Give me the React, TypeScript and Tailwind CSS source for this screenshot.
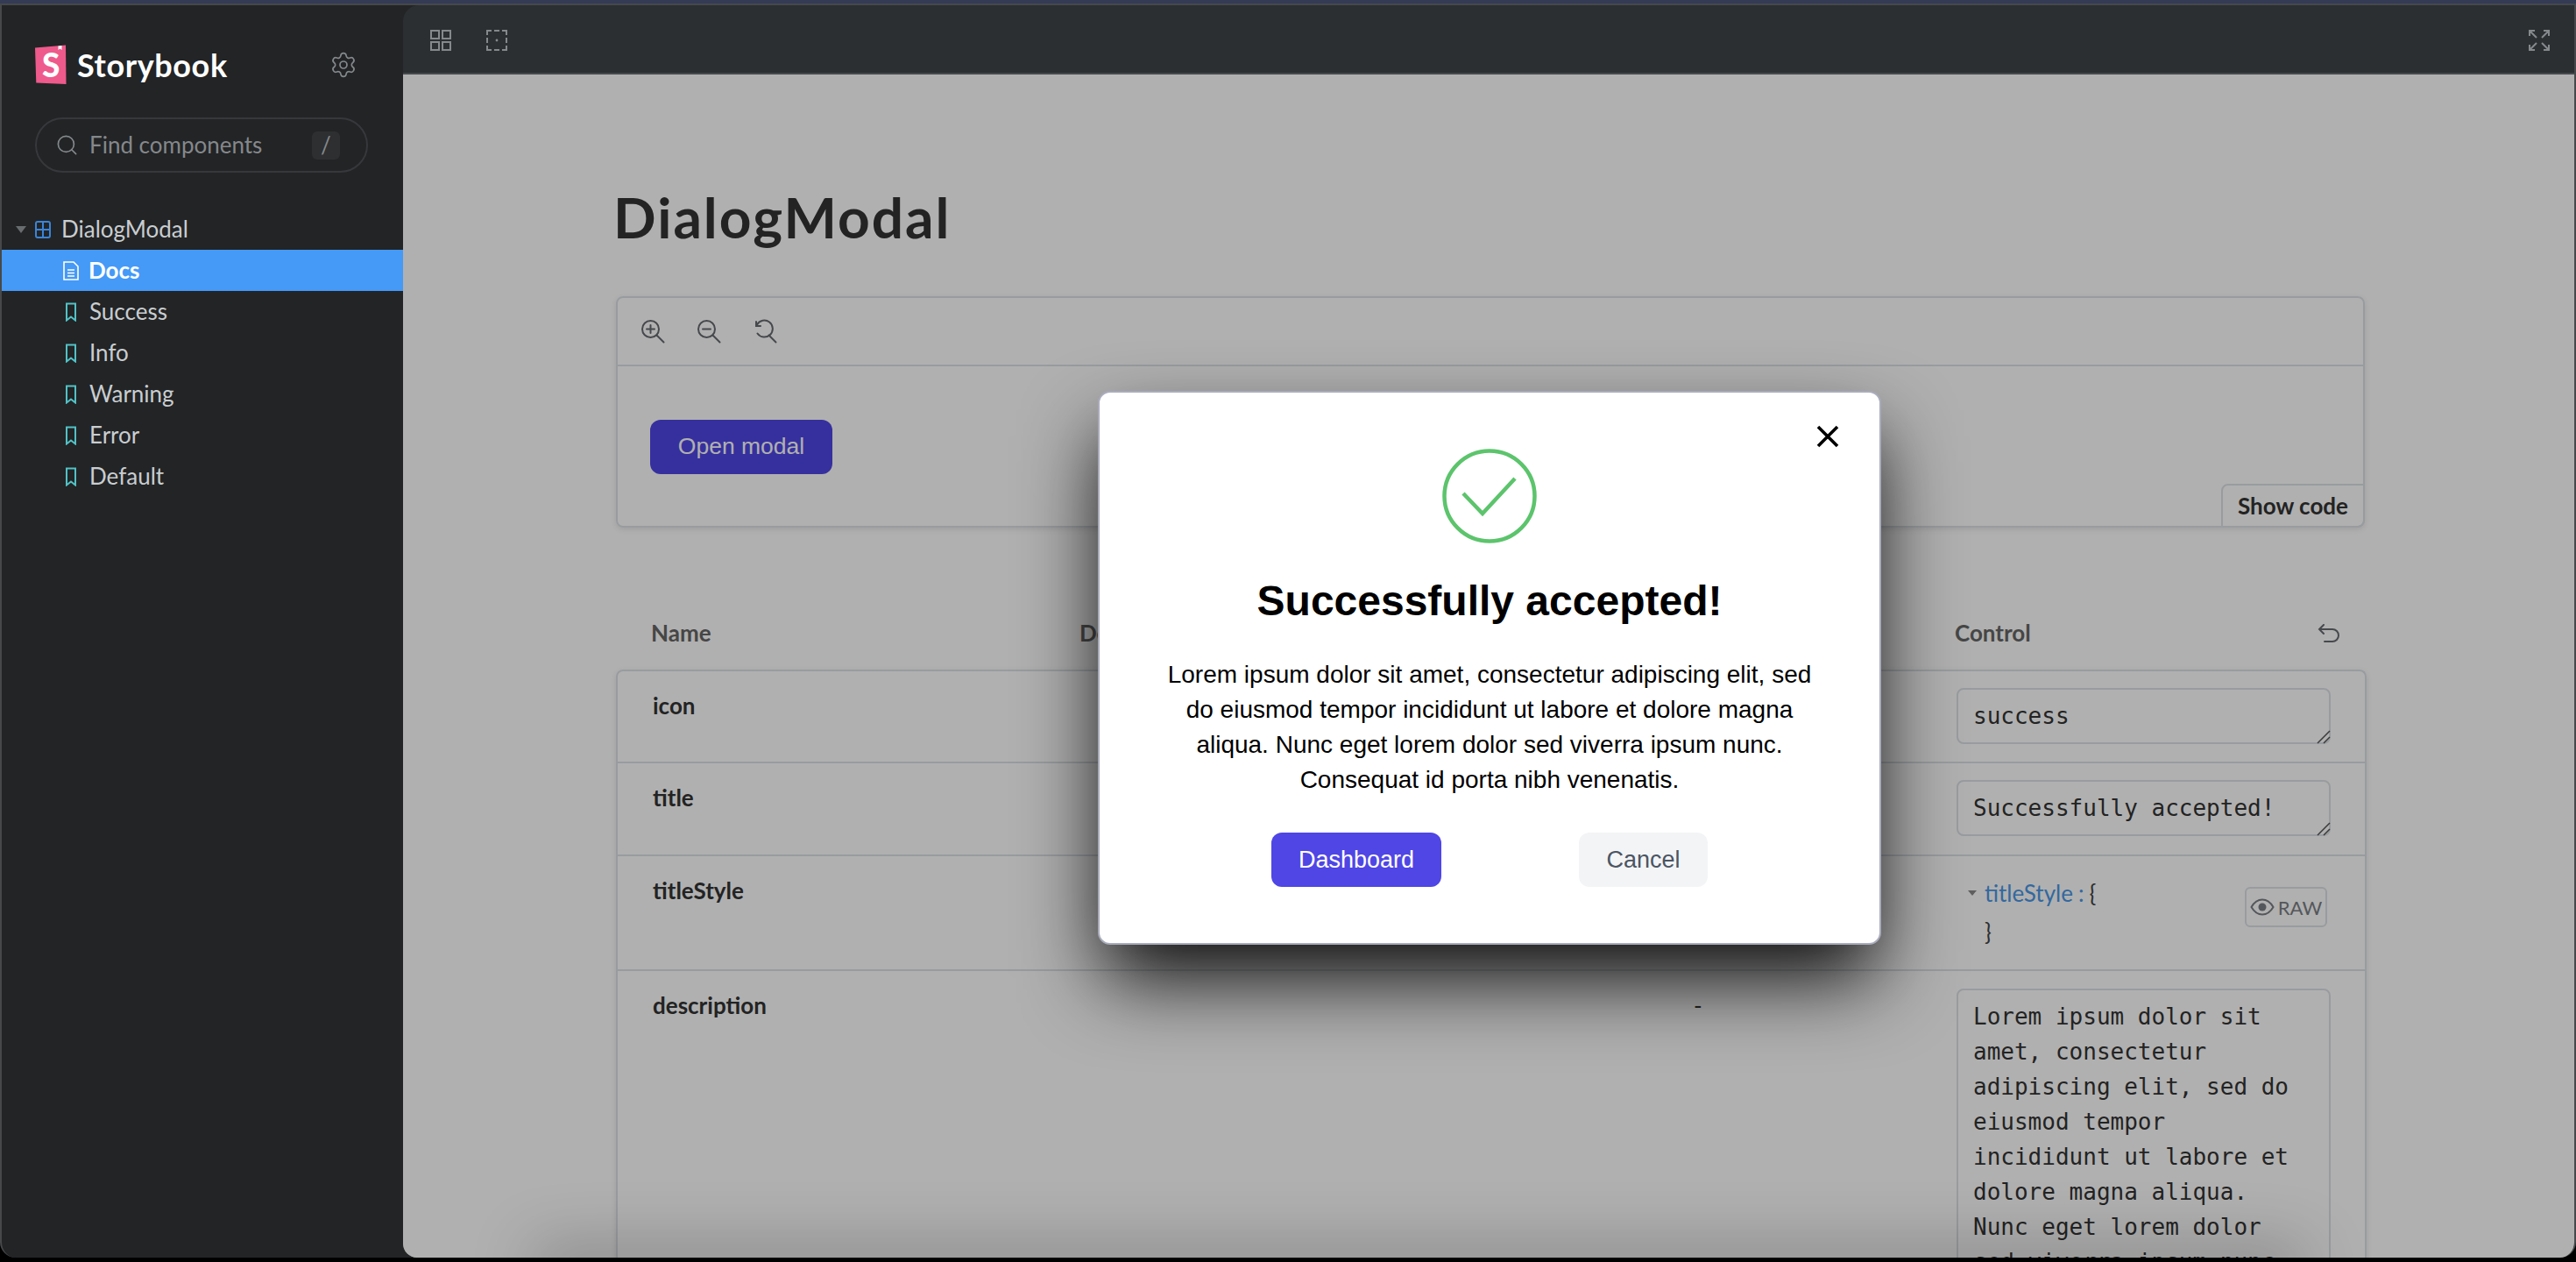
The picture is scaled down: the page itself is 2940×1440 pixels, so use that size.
import React from "react";
import { Search, Settings } from "lucide-react";

const stories = ["Success", "Info", "Warning", "Error", "Default"];

const loremText =
  "Lorem ipsum dolor sit amet, consectetur adipiscing elit, sed do eiusmod tempor incididunt ut labore et dolore magna aliqua. Nunc eget lorem dolor sed viverra ipsum nunc. Consequat id porta nibh venenatis.";

const gridCols = "grid grid-cols-[489px_699px_300px_1fr] pl-10";

const BookmarkIcon: React.FC = () => (
  <svg width="14" height="22" viewBox="0 0 14 22" fill="none" stroke="#52c2c6" strokeWidth="2">
    <path d="M2 1.5h10v19l-5-4-5 4z" />
  </svg>
);

const Logo: React.FC = () => (
  <svg width="36" height="46" viewBox="0 0 36 46">
    <polygon points="0,3.5 35,0.5 35.5,45 1.3,43.5" fill="#ee5a8b" />
    <polygon points="26.5,1.5 30.5,1 30.5,6 28.5,4.5 26.5,6" fill="#ffffff" />
    <text x="8" y="36.5" fontSize="37" fontWeight="900" fill="#ffffff" fontFamily="Lato, sans-serif">
      S
    </text>
  </svg>
);

const ZoomGlyph: React.FC<{ kind: "in" | "out" | "reset" }> = ({ kind }) => (
  <svg width="28" height="28" viewBox="0 0 28 28" fill="none" stroke="#666a6e" strokeWidth="2" strokeLinecap="round">
    {kind === "reset" ? (
      <path d="M5 6.5a9.5 9.5 0 1 1 0.5 10M4 3v5h5" />
    ) : (
      <circle cx="11.5" cy="11.5" r="9.5" />
    )}
    <path d="M18.5 18.5l8 8" />
    {kind !== "reset" && <path d="M7 11.5h9" />}
    {kind === "in" && <path d="M11.5 7v9" />}
  </svg>
);

const Sidebar: React.FC = () => (
  <aside className="w-[458px] shrink-0 text-[26px] text-[#c9cdd0]">
    <div className="flex items-start justify-between pl-[38px] pr-[52px] pt-[45px] h-[128px]">
      <div className="flex items-center gap-[12px]">
        <Logo />
        <span className="text-[36px] font-bold text-white leading-[44px] tracking-[0.6px]">Storybook</span>
      </div>
      <Settings size={32} strokeWidth={1.3} color="#85888b" className="mt-[7px]" />
    </div>
    <div className="ml-[38px] w-[380px] h-[63px] rounded-full border-2 border-[#36383b] flex items-center pl-[21px] pr-[30px]">
      <Search size={27} strokeWidth={1.5} color="#85888b" />
      <span className="ml-[12px] flex-1 text-[#85888b]">Find components</span>
      <span className="w-[32px] h-[32px] rounded-[6px] bg-[#2d2f31] text-[#85888b] flex items-center justify-center">/</span>
    </div>
    <div className="mt-[41px]">
      <div className="h-[47px] flex items-center pl-[15px]">
        <svg width="14" height="8" viewBox="0 0 14 8" className="mr-[9px]">
          <polygon points="1,0 13,0 7,8" fill="#696c6f" />
        </svg>
        <svg width="18" height="20" viewBox="0 0 18 20" fill="none" stroke="#3b84d6" strokeWidth="2" className="mr-[12px]">
          <rect x="1" y="1" width="16" height="18" rx="2" />
          <path d="M9 1v18M1 10h16" />
        </svg>
        <span>DialogModal</span>
      </div>
      <div className="h-[47px] flex items-center pl-[69px] bg-[#4599f7] text-white font-bold">
        <svg width="20" height="22" viewBox="0 0 20 22" fill="none" stroke="#ffffff" strokeWidth="1.6" className="mr-[10px]">
          <path d="M2 1h11l5 5v15H2zM6 10h8M6 13.5h8M6 17h8" />
        </svg>
        <span>Docs</span>
      </div>
      {stories.map((story) => (
        <div key={story} className="h-[47px] flex items-center pl-[72px]">
          <span className="mr-[14px] flex"><BookmarkIcon /></span>
          <span>{story}</span>
        </div>
      ))}
    </div>
  </aside>
);

const Toolbar: React.FC = () => (
  <div className="h-[79px] shrink-0 bg-[#2b2f32] border-b-2 border-[#45494c] flex items-center pl-[31px] pr-[28px] pt-[2px] gap-[40px]">
    <svg width="24" height="24" viewBox="0 0 24 24" fill="none" stroke="#85898c" strokeWidth="2">
      <rect x="1" y="1" width="9" height="9" />
      <rect x="14" y="1" width="9" height="9" />
      <rect x="1" y="14" width="9" height="9" />
      <rect x="14" y="14" width="9" height="9" />
    </svg>
    <svg width="24" height="24" viewBox="0 0 24 24" fill="none" stroke="#85898c" strokeWidth="2">
      <path d="M6 1H1v5M9 1h6M18 1h5v5M23 9v6M23 18v5h-5M15 23H9M6 23H1v-5M1 15V9" />
      <circle cx="12" cy="12" r="1.4" fill="#85898c" stroke="none" />
    </svg>
    <svg width="24" height="24" viewBox="0 0 24 24" fill="none" stroke="#85898c" strokeWidth="2" className="ml-auto">
      <path d="M1 7V1h6M1 1l8 8M17 1h6v6M23 1l-8 8M1 17v6h6M1 23l8-8M23 17v6h-6M23 23l-8-8" />
    </svg>
  </div>
);

const Field: React.FC<{ value: string; rows?: number }> = ({ value, rows = 1 }) => (
  <div className="relative w-[427px]">
    <textarea
      readOnly
      defaultValue={value}
      rows={rows}
      className="w-full block rounded-[8px] border-2 border-[#dde2e6] bg-white px-[17px] py-[10px] text-[26px] leading-[40px] text-[#333333] font-['DejaVu_Sans_Mono',monospace] outline-none resize-none overflow-hidden"
    />
    {/* resize grip */}
    <svg width="16" height="16" viewBox="0 0 16 16" stroke="#555555" strokeWidth="1.5" className="absolute right-0 bottom-0">
      <path d="M1 15L15 1M8 15l7-7" />
    </svg>
  </div>
);

const DocsPage: React.FC = () => (
  <div className="pl-[243px] w-[2242px] text-[#333333]">
    <h1 className="pt-[118px] -ml-[3px] text-[64px] leading-[90px] font-bold tracking-[2px]">DialogModal</h1>
    <div className="relative mt-[45px] h-[264px] w-[1996px] rounded-[8px] border-2 border-[#dde2e6] shadow-[0_2px_6px_rgba(0,0,0,0.1)]">
      <div className="h-[78px] border-b-2 border-[#dde2e6] flex items-center pl-[26px] gap-[36px]">
        <ZoomGlyph kind="in" />
        <ZoomGlyph kind="out" />
        <ZoomGlyph kind="reset" />
      </div>
      <button className="mt-[61px] ml-[37px] h-[62px] w-[208px] rounded-[12px] bg-[#4f46e5] text-white text-[26.5px] font-medium font-['Liberation_Sans',Arial,sans-serif]">
        Open modal
      </button>
      <div className="absolute -right-[2px] -bottom-[2px] w-[164px] h-[50px] rounded-tl-[8px] rounded-br-[8px] border-2 border-[#dde2e6] flex items-center justify-center text-[26px] font-bold">
        Show code
      </div>
    </div>
    <div className={`${gridCols} mt-[101px] h-[34px] items-center w-[1998px] text-[26px] font-bold text-[#666666]`}>
      <span>Name</span>
      <span>Description</span>
      <span>Default</span>
      <span className="flex items-center justify-between pr-[30px]">
        Control
        <svg width="26" height="22" viewBox="0 0 26 22" fill="none" stroke="#666a6e" strokeWidth="2" strokeLinecap="round">
          <path d="M7 1L2 6l5 5M2 6h15a7 7 0 0 1 0 14H8" />
        </svg>
      </span>
    </div>
    <div className="mt-[27px] w-[1998px] rounded-t-[8px] border-x-2 border-t-2 border-[#dde2e6] shadow-[0_2px_6px_rgba(0,0,0,0.1)] text-[26px]">
      <div className={`${gridCols} h-[105px] border-b-2 border-[#dde2e6]`}>
        <span className="pt-[20px] font-bold">icon</span>
        <span />
        <span />
        <div className="pt-[19px]"><Field value="success" /></div>
      </div>
      <div className={`${gridCols} h-[106px] border-b-2 border-[#dde2e6]`}>
        <span className="pt-[20px] font-bold">title</span>
        <span />
        <span />
        <div className="pt-[19px]"><Field value="Successfully accepted!" /></div>
      </div>
      <div className={`${gridCols} h-[131px] border-b-2 border-[#dde2e6]`}>
        <span className="pt-[20px] font-bold">titleStyle</span>
        <span />
        <span />
        <div className="pt-[20px] flex justify-between pr-[43px]">
          <div className="pl-[13px]">
            <div className="flex items-center h-[44px]">
              <svg width="10" height="6" viewBox="0 0 10 6" className="mr-[9px]">
                <polygon points="0,0 10,0 5,6" fill="#8a8a8a" />
              </svg>
              <span className="text-[#4a97e6]">titleStyle</span>
              <span className="text-[#4a97e6] ml-[6px]">:</span>
              <span className="ml-[6px] text-[#444444]">{"{"}</span>
            </div>
            <div className="pl-[19px] h-[44px] flex items-center text-[#444444]">{"}"}</div>
          </div>
          <div className="mt-[15px] w-[94px] h-[46px] rounded-[6px] border-2 border-[#dde2e6] flex items-center justify-center gap-[4px] text-[22px] text-[#7a7e84]">
            <svg width="28" height="20" viewBox="0 0 28 20" fill="none" stroke="#7a7e84" strokeWidth="2">
              <path d="M1.5 10C5 4 9 1.5 14 1.5S23 4 26.5 10C23 16 19 18.5 14 18.5S5 16 1.5 10z" />
              <circle cx="14" cy="10" r="4.5" fill="#7a7e84" stroke="none" />
            </svg>
            RAW
          </div>
        </div>
      </div>
      <div className={`${gridCols} h-[700px]`}>
        <span className="pt-[20px] font-bold">description</span>
        <span />
        <span className="pt-[20px]">-</span>
        <div className="pt-[20px]"><Field value={loremText} rows={14} /></div>
      </div>
    </div>
  </div>
);

const SuccessModal: React.FC = () => (
  <div className="absolute inset-0 bg-[rgba(0,0,0,0.31)] flex items-center justify-center pt-[4px] pl-[2px]">
    {/* shadow coming up from below the frame */}
    <div className="absolute top-full left-[160px] w-[2000px] h-[20px] shadow-[0_0_70px_12px_rgba(0,0,0,0.26)]" />
    <div className="relative w-[894px] h-[632px] rounded-[14px] border-2 border-[#a9acbc] bg-white shadow-[0_44px_90px_-6px_rgba(0,0,0,0.92)] flex flex-col items-center pt-[64px] text-black font-['Liberation_Sans',Arial,sans-serif]">
      <svg width="26" height="26" viewBox="0 0 26 26" fill="none" stroke="#000000" strokeWidth="3.6" className="absolute top-[37px] right-[46px]">
        <path d="M2 2l22 22M24 2L2 24" />
      </svg>
      <svg width="108" height="108" viewBox="0 0 108 108" fill="none" stroke="#5cc46c" strokeWidth="4.5">
        <circle cx="54" cy="54" r="51.5" />
        <path d="M24 51l22 23 37-40" />
      </svg>
      <h2 className="mt-[38px] text-[48px] leading-[56px] font-bold">Successfully accepted!</h2>
      <p className="mt-[36px] w-[760px] text-center text-[28px] leading-[40px]">{loremText}</p>
      <div className="mt-[40px] flex gap-[157px]">
        <button className="w-[194px] h-[62px] rounded-[12px] bg-[#4f46e5] text-white text-[27px] font-medium">Dashboard</button>
        <button className="w-[147px] h-[62px] rounded-[12px] bg-[#f3f4f6] text-[#4b5563] text-[27px] font-medium">Cancel</button>
      </div>
    </div>
  </div>
);

const App: React.FC = () => {
  return (
    <div className="w-[2940px] h-[1440px] bg-black overflow-hidden font-[Lato,sans-serif]">
      <div className="h-[4px] bg-[#343b55]" />
      <div className="h-[1431px] flex bg-[#222426] border-t-2 border-x-2 border-[#46484a] rounded-b-[18px] overflow-hidden">
        <Sidebar />
        <main className="flex-1 min-w-0 flex flex-col rounded-tl-[18px] rounded-b-[16px] overflow-hidden">
          <Toolbar />
          <div className="relative flex-1 overflow-hidden bg-white">
            <DocsPage />
            <SuccessModal />
          </div>
        </main>
      </div>
    </div>
  );
};

export default App;
